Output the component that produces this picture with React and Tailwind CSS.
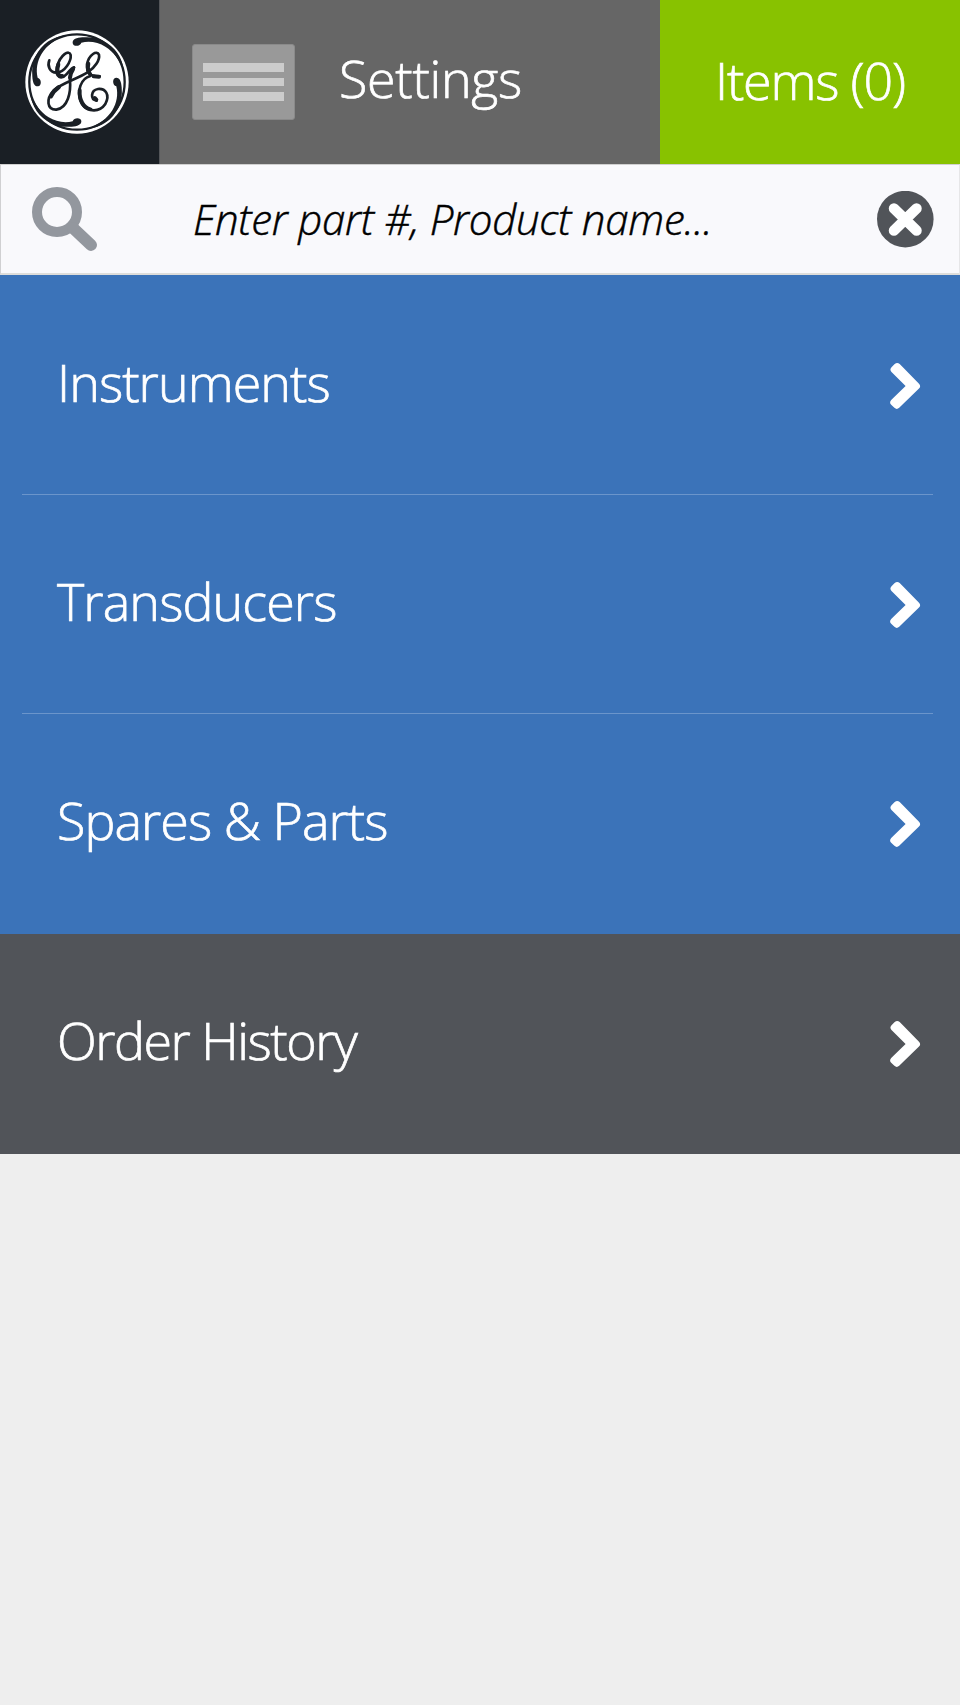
const SWIRL =
  "M217,128 C216,117 229,112 246,111 C270,109 290,112 306,120 C345,140 366,170 371,215 C358,178 340,155 315,139 C294,126 268,121 243,127 C240,139 218,140 217,128 Z";

function Logo() {
  return (
    <svg className="block h-[104px] w-[104px]" viewBox="74 89 312 312" fill="none">
      <circle cx="230" cy="245" r="155" fill="#fff" />
      <circle cx="230" cy="245" r="143" stroke="#1a1f25" strokeWidth="7" />
      {[0, 90, 180, 270].map((a) => (
        <path key={a} d={SWIRL} fill="#1a1f25" transform={`rotate(${a} 230 245)`} />
      ))}
      <g stroke="#1a1f25" strokeWidth="8" strokeLinecap="round" strokeLinejoin="round">
        <path d="M147,180 C140,197 149,217 168,217 C194,216 213,182 211,164 C207,147 180,162 170,200 C164,234 184,238 198,222 C207,212 214,202 221,201" />
        <path d="M221,202 C212,214 207,226 209,240 C212,275 203,323 168,328 C140,329 136,296 160,270 C185,248 228,237 262,216 C285,201 299,178 296,163 C290,149 266,162 260,192 C258,215 268,229 298,228" />
        <path d="M270,227 C240,235 231,272 240,300 C252,336 296,339 315,311 C330,282 315,264 293,266 C271,270 269,297 289,301" />
        <path strokeWidth="12" d="M174,192 C167,214 173,229 186,227 M264,190 C261,205 264,216 270,222 M280,228 L296,229 M218,207 C212,216 209,224 209,232 M238,270 C236,300 250,322 270,327 M152,288 C158,275 166,267 176,260 M283,293 L288,298" />
      </g>
    </svg>
  );
}

function Chevron() {
  return (
    <svg className="mr-[39px] block h-[48px] w-[32px]" viewBox="0 0 32 48">
      <path d="M2.5 5.2 L5.7 2 Q8.2 .2 10.7 2 L30 21.8 Q32.3 24.2 30 26.4 L10.2 45.8 Q7.8 48 5.4 45.8 L2.2 42.7 Q0 40.4 2.2 38 L16.6 24 L2.5 10 Q.3 7.6 2.5 5.2 Z" fill="#fff" />
    </svg>
  );
}

function Row({ label, text, divider }) {
  return (
    <div className="relative flex h-[219px] items-center justify-between pl-[57px]">
      <span className={"mb-[8px] whitespace-nowrap text-[52px] leading-[70px] font-light text-white [-webkit-text-stroke:0.7px_white] " + text}>{label}</span>
      <Chevron />
      {divider && <div className="absolute right-[27px] bottom-0 left-[22px] h-px bg-[#6b95cb]" />}
    </div>
  );
}

export default function App() {
  return (
    <div className="flex h-[1705px] w-[960px] flex-col overflow-hidden bg-[#eeeeee] font-['Open_Sans',sans-serif]">
      <header className="flex h-[164px] shrink-0 text-[52px] leading-[70px] font-light whitespace-nowrap text-white [-webkit-text-stroke:0.7px_white]">
        <div className="flex w-[159px] items-center justify-center bg-[#1a1f25] pr-[5px]">
          <Logo />
        </div>
        <div className="flex w-[501px] items-center border-l border-[#54565a] bg-[#666666] pl-[32px]">
          <div className="flex h-[76px] w-[103px] flex-col items-center gap-[6px] rounded-[3px] border border-[#8a8a8a] bg-[#999999] pt-[18px]">
            <div className="h-[9px] w-[81px] bg-[#cccccc]" />
            <div className="h-[8px] w-[81px] bg-[#cccccc]" />
            <div className="h-[9px] w-[81px] bg-[#cccccc]" />
          </div>
          <span className="mb-[8px] ml-[44px] tracking-[-0.3px]">Settings</span>
        </div>
        <div className="flex w-[300px] items-center bg-[#88c200] pl-[55px]">
          <span className="mb-[5px] tracking-[-1.2px]">Items (0)</span>
        </div>
      </header>
      <div className="flex h-[111px] shrink-0 items-center border-t border-r border-b-2 border-l border-t-[#d0d0d0] border-r-[#e6e6e8] border-b-[#deddda] border-l-[#d0d0d2] bg-[#f9f9fc]">
        <svg className="ml-[31px] block h-[65px] w-[66px]" viewBox="0 0 66 65" fill="none" stroke="#93979e">
          <circle cx="25" cy="25" r="20" strokeWidth="10" />
          <path d="M41 41 L59 58" strokeWidth="12" strokeLinecap="round" />
        </svg>
        <span className="ml-[95px] text-[42px] leading-[58px] font-light tracking-[-0.26px] whitespace-nowrap text-black italic [-webkit-text-stroke:0.5px_black]">Enter part #, Product name...</span>
        <svg className="mr-[25px] ml-auto block h-[57px] w-[57px]" viewBox="0 0 57 57">
          <circle cx="28.3" cy="28.1" r="28.3" fill="#515459" />
          <path d="M17 17.5 L39.5 39.5 M39.5 17.5 L17 39.5" stroke="#fff" strokeWidth="10.5" strokeLinecap="round" />
        </svg>
      </div>
      <nav className="h-[659px] shrink-0 bg-[#3b73b9] pt-px">
        <Row label="Instruments" text="tracking-[-0.95px]" divider />
        <Row label="Transducers" text="tracking-[-0.9px]" divider />
        <Row label="Spares &amp; Parts" text="tracking-[-0.95px]" />
      </nav>
      <div className="h-[220px] shrink-0 bg-[#515459]">
        <Row label="Order History" text="tracking-[-1.48px]" />
      </div>
    </div>
  );
}
